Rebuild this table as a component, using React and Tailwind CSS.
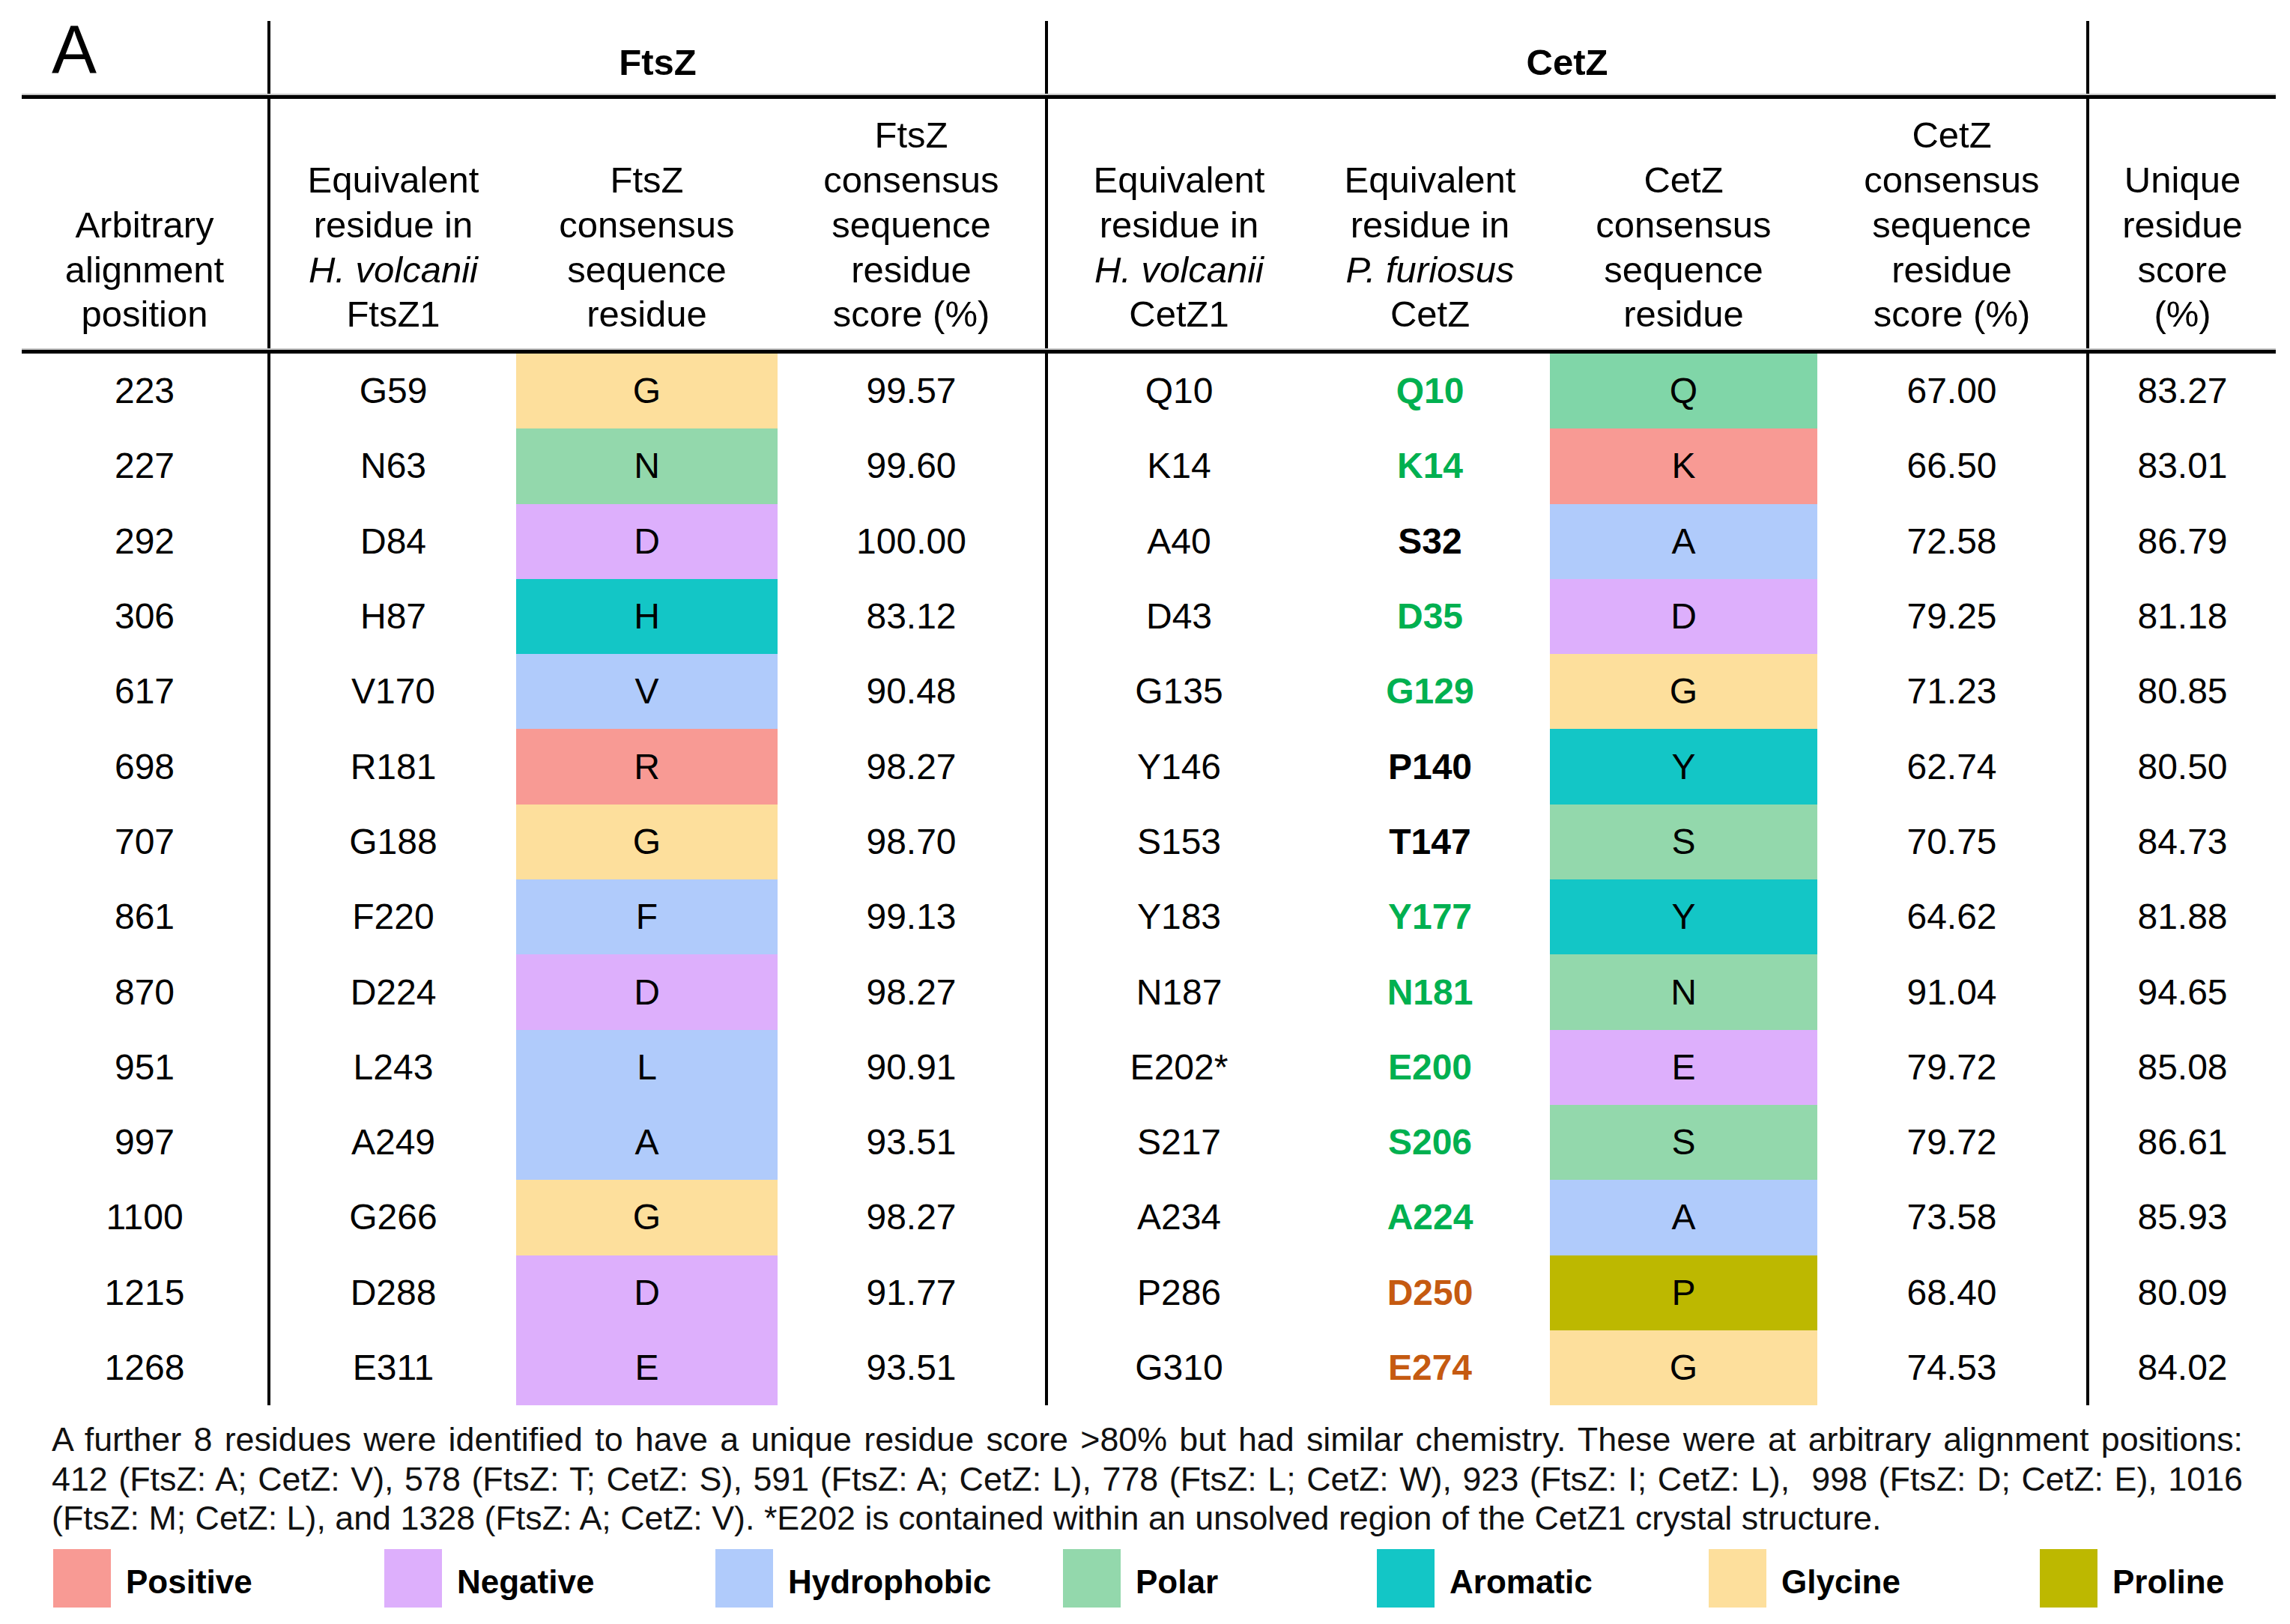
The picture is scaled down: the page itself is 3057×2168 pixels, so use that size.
import React from 'react';

// residue class colours used by the consensus cells and the legend
const SW = {
  pos: 'bg-[#f89a94]',
  neg: 'bg-[#ddaffc]',
  hyd: 'bg-[#b0cbfb]',
  pol: 'bg-[#93d8ac]',
  pol2: 'bg-[#80d6a8]',
  aro: 'bg-[#13c6c6]',
  gly: 'bg-[#fddf9c]',
  pro: 'bg-[#bdb800]',
};

const PF = {
  g: 'font-bold text-[#00b050]',
  k: 'font-bold text-black',
  o: 'font-bold text-[#c55a11]',
};

// pos, ftsz1, ftsz res, ftsz class, ftsz score, cetz1, pfu, pfu style, cetz res, cetz class, cetz score, unique
const rows = [
  ['223', 'G59', 'G', 'gly', '99.57', 'Q10', 'Q10', 'g', 'Q', 'pol2', '67.00', '83.27'],
  ['227', 'N63', 'N', 'pol', '99.60', 'K14', 'K14', 'g', 'K', 'pos', '66.50', '83.01'],
  ['292', 'D84', 'D', 'neg', '100.00', 'A40', 'S32', 'k', 'A', 'hyd', '72.58', '86.79'],
  ['306', 'H87', 'H', 'aro', '83.12', 'D43', 'D35', 'g', 'D', 'neg', '79.25', '81.18'],
  ['617', 'V170', 'V', 'hyd', '90.48', 'G135', 'G129', 'g', 'G', 'gly', '71.23', '80.85'],
  ['698', 'R181', 'R', 'pos', '98.27', 'Y146', 'P140', 'k', 'Y', 'aro', '62.74', '80.50'],
  ['707', 'G188', 'G', 'gly', '98.70', 'S153', 'T147', 'k', 'S', 'pol', '70.75', '84.73'],
  ['861', 'F220', 'F', 'hyd', '99.13', 'Y183', 'Y177', 'g', 'Y', 'aro', '64.62', '81.88'],
  ['870', 'D224', 'D', 'neg', '98.27', 'N187', 'N181', 'g', 'N', 'pol', '91.04', '94.65'],
  ['951', 'L243', 'L', 'hyd', '90.91', 'E202*', 'E200', 'g', 'E', 'neg', '79.72', '85.08'],
  ['997', 'A249', 'A', 'hyd', '93.51', 'S217', 'S206', 'g', 'S', 'pol', '79.72', '86.61'],
  ['1100', 'G266', 'G', 'gly', '98.27', 'A234', 'A224', 'g', 'A', 'hyd', '73.58', '85.93'],
  ['1215', 'D288', 'D', 'neg', '91.77', 'P286', 'D250', 'o', 'P', 'pro', '68.40', '80.09'],
  ['1268', 'E311', 'E', 'neg', '93.51', 'G310', 'E274', 'o', 'G', 'gly', '74.53', '84.02'],
];

const legend = [
  ['pos', 'Positive', 'w-[442px]'],
  ['neg', 'Negative', 'w-[442px]'],
  ['hyd', 'Hydrophobic', 'w-[464px]'],
  ['pol', 'Polar', 'w-[419px]'],
  ['aro', 'Aromatic', 'w-[443px]'],
  ['gly', 'Glycine', 'w-[442px]'],
  ['pro', 'Proline', 'w-[300px]'],
];

const COLS = 'grid grid-cols-[328px_332px_349px_357px_354px_320px_357px_359px_253px]';

function Head({ children, line }) {
  return (
    <div className={`flex items-end justify-center pb-[17px] text-center text-[49px] leading-[59.7px] ${line ? 'border-l-4 border-black' : ''}`}>
      <div>{children}</div>
    </div>
  );
}

function Cell({ children, line, cls = '' }) {
  return (
    <div className={`flex h-[100.3px] items-center justify-center text-[48px] ${line ? 'border-l-4 border-black' : ''} ${cls}`}>
      {children}
    </div>
  );
}

function Rule() {
  return <div className="col-span-9 h-[5px] bg-black shadow-[0_-2px_0_#c6c6c6]" />;
}

export default function App() {
  return (
    <div className="h-[2168px] w-[3057px] overflow-hidden bg-white pl-[29px] pt-[28px] text-black [font-family:'Liberation_Sans',Arial,sans-serif]">
      <div className={`${COLS} w-[3009px]`}>
        {/* group headers */}
        <div className="flex h-[99px] items-start pl-[40px]">
          <span className="-mt-[7px] text-[90px] leading-[90px]">A</span>
        </div>
        <div className="col-span-3 flex items-end justify-center border-l-4 border-black pb-[15px] text-[49px] font-bold leading-[57px]">FtsZ</div>
        <div className="col-span-4 flex items-end justify-center border-l-4 border-black pb-[15px] text-[49px] font-bold leading-[57px]">CetZ</div>
        <div className="border-l-4 border-black" />
        <Rule />

        {/* column headers */}
        <div className="col-span-9 grid h-[335px] grid-cols-subgrid">
          <Head>Arbitrary<br />alignment<br />position</Head>
          <Head line>Equivalent<br />residue in<br /><i>H. volcanii</i><br />FtsZ1</Head>
          <Head>FtsZ<br />consensus<br />sequence<br />residue</Head>
          <Head>FtsZ<br />consensus<br />sequence<br />residue<br />score (%)</Head>
          <Head line>Equivalent<br />residue in<br /><i>H. volcanii</i><br />CetZ1</Head>
          <Head>Equivalent<br />residue in<br /><i>P. furiosus</i><br />CetZ</Head>
          <Head>CetZ<br />consensus<br />sequence<br />residue</Head>
          <Head>CetZ<br />consensus<br />sequence<br />residue<br />score (%)</Head>
          <Head line>Unique<br />residue<br />score<br />(%)</Head>
        </div>
        <Rule />

        {rows.map(r => (
          <React.Fragment key={r[0]}>
            <Cell>{r[0]}</Cell>
            <Cell line>{r[1]}</Cell>
            <Cell cls={SW[r[3]]}>{r[2]}</Cell>
            <Cell>{r[4]}</Cell>
            <Cell line>{r[5]}</Cell>
            <Cell cls={PF[r[7]]}>{r[6]}</Cell>
            <Cell cls={SW[r[9]]}>{r[8]}</Cell>
            <Cell>{r[10]}</Cell>
            <Cell line>{r[11]}</Cell>
          </React.Fragment>
        ))}
      </div>

      {/* footnote */}
      <div className="ml-[40px] mt-[19px] w-[2925px] text-[44.8px] leading-[52.5px] text-[#111]">
        <div className="text-justify [text-align-last:justify]">
          A further 8 residues were identified to have a unique residue score &gt;80% but had similar chemistry. These were at arbitrary alignment positions:
        </div>
        <div className="text-justify [text-align-last:justify]">
          412 (FtsZ: A; CetZ: V), 578 (FtsZ: T; CetZ: S), 591 (FtsZ: A; CetZ: L), 778 (FtsZ: L; CetZ: W), 923 (FtsZ: I; CetZ: L),&nbsp; 998 (FtsZ: D; CetZ: E), 1016
        </div>
        <div>
          (FtsZ: M; CetZ: L), and 1328 (FtsZ: A; CetZ: V). *E202 is contained within an unsolved region of the CetZ1 crystal structure.
        </div>
      </div>

      {/* legend */}
      <div className="ml-[42px] mt-[15.5px] flex">
        {legend.map(([k, label, w]) => (
          <div key={k} className={`flex shrink-0 items-center ${w}`}>
            <div className={`h-[78px] w-[77px] ${SW[k]}`} />
            <span className="ml-[20px] pt-[10px] text-[44px] font-bold leading-[50px]">{label}</span>
          </div>
        ))}
      </div>
    </div>
  );
}
